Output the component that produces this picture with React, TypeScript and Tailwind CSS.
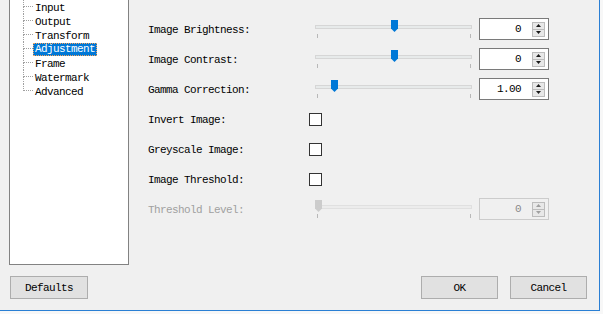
const mono = "font-['Liberation_Mono',monospace] text-[11px] tracking-[-0.6px]";

const treeItems = ["Input", "Output", "Transform", "Adjustment", "Frame", "Watermark", "Advanced"];

interface SliderProps {
    pos: number;
    disabled?: boolean;
}

const Slider: React.FC<SliderProps> = ({ pos, disabled }) => {
    return (
        <div className="relative w-[170px] h-[30px]">
            <div
                className={
                    disabled
                        ? "absolute left-[6px] top-[11px] w-[157px] h-[4px] border border-[#e0e0e0] bg-[#ececec]"
                        : "absolute left-[6px] top-[11px] w-[157px] h-[4px] border border-[#d6d6d6] bg-[#e7eaea]"
                }
            />
            <div className="absolute left-[8px] top-[20px] w-px h-[4px] bg-[#b8b8b8]" />
            <div className="absolute left-[161px] top-[20px] w-px h-[4px] bg-[#b8b8b8]" />
            <svg
                className="absolute top-[6px]"
                style={{ left: pos }}
                width="7"
                height="12"
                viewBox="0 0 7 12"
            >
                <path
                    d="M0 0H7V8.5L3.5 12L0 8.5Z"
                    fill={disabled ? "#cccccc" : "#0078d7"}
                />
            </svg>
        </div>
    );
};

const Arrow: React.FC<{ up?: boolean; disabled?: boolean }> = ({ up, disabled }) => (
    <svg width="5" height="3" viewBox="0 0 5 3">
        <path
            d={up ? "M2.5 0L5 3H0Z" : "M0 0H5L2.5 3Z"}
            fill={disabled ? "#a0a0a0" : "#1a1a1a"}
        />
    </svg>
);

const SpinBox: React.FC<{ value: string; disabled?: boolean }> = ({ value, disabled }) => {
    return (
        <div
            className={
                disabled
                    ? "flex items-center w-[70px] h-[22px] border border-[#cccccc] bg-[#f0f0f0]"
                    : "flex items-center w-[70px] h-[22px] border border-[#7a7a7a] bg-white"
            }
        >
            <span
                className={`flex-1 text-right pr-[11px] pt-px ${mono} ${
                    disabled ? "text-[#8a8a8a]" : "text-black"
                }`}
            >
                {value}
            </span>
            <div className="flex flex-col w-[13px] mr-[3px]">
                <div className="flex items-center justify-center h-[8px] border border-[#bcbcbc] bg-[#e8e8e8]">
                    <Arrow up disabled={disabled} />
                </div>
                <div className="flex items-center justify-center h-[8px] -mt-px border border-[#bcbcbc] bg-[#e8e8e8]">
                    <Arrow disabled={disabled} />
                </div>
            </div>
        </div>
    );
};

const CheckBox: React.FC = () => (
    <div className="w-[13px] h-[13px] border border-[#333333] bg-white" />
);

const Label: React.FC<{ text: string; disabled?: boolean }> = ({ text, disabled }) => (
    <div className={`w-[161px] pt-[2px] ${mono} ${disabled ? "text-[#a0a0a0]" : "text-black"}`}>{text}</div>
);

const Button: React.FC<{ text: string; width: string }> = ({ text, width }) => (
    <div
        className={`${width} h-[23px] flex items-center justify-center pt-px border border-[#adadad] bg-[#e1e1e1] text-black ${mono}`}
    >
        {text}
    </div>
);

export default function App() {
    return (
        <div className="w-[603px] h-[314px] bg-[#f7f7f7]">
            <div className="w-[600px] h-[311px] bg-[#f0f0f0] border-r border-b border-[#2a7fd4] flex flex-col">
                <div className="flex h-[265px]">
                    <div className="ml-[9px] w-[120px] h-[265px] bg-white border-l border-r border-b border-[#828282]">
                        <div className="flex flex-col">
                            {treeItems.map((item, i) => {
                                const last = i === treeItems.length - 1;
                                const selected = item === "Adjustment";
                                return (
                                    <div key={item} className="flex items-center h-[14px]">
                                        <div className="w-[13px]" />
                                        <div className="flex flex-col w-[10px] h-[14px]">
                                            <div className="h-[7px] border-l border-b border-dotted border-[#a0a0a0]" />
                                            <div
                                                className={
                                                    last
                                                        ? "h-[7px]"
                                                        : "h-[7px] border-l border-dotted border-[#a0a0a0]"
                                                }
                                            />
                                        </div>
                                        <div
                                            className={
                                                selected
                                                    ? `h-[13px] flex items-center px-px pt-px border border-dotted border-[#f7a45b] bg-[#0078d7] text-white ${mono}`
                                                    : `h-[13px] flex items-center px-[2px] pt-[2px] text-black ${mono}`
                                            }
                                        >
                                            {item}
                                        </div>
                                    </div>
                                );
                            })}
                        </div>
                    </div>
                    <div className="ml-[19px] pt-[14px] flex flex-col">
                        <div className="flex items-center h-[30px]">
                            <Label text="Image Brightness:" />
                            <Slider pos={82} />
                            <SpinBox value="0" />
                        </div>
                        <div className="flex items-center h-[30px]">
                            <Label text="Image Contrast:" />
                            <Slider pos={82} />
                            <SpinBox value="0" />
                        </div>
                        <div className="flex items-center h-[30px]">
                            <Label text="Gamma Correction:" />
                            <Slider pos={22} />
                            <SpinBox value="1.00" />
                        </div>
                        <div className="flex items-center h-[30px]">
                            <Label text="Invert Image:" />
                            <CheckBox />
                        </div>
                        <div className="flex items-center h-[30px]">
                            <Label text="Greyscale Image:" />
                            <CheckBox />
                        </div>
                        <div className="flex items-center h-[30px]">
                            <Label text="Image Threshold:" />
                            <CheckBox />
                        </div>
                        <div className="flex items-center h-[30px]">
                            <Label text="Threshold Level:" disabled />
                            <Slider pos={6} disabled />
                            <SpinBox value="0" disabled />
                        </div>
                    </div>
                </div>
                <div className="flex justify-between mt-[11px] pl-[10px] pr-[12px]">
                    <Button text="Defaults" width="w-[78px]" />
                    <div className="flex gap-[12px]">
                        <Button text="OK" width="w-[77px]" />
                        <Button text="Cancel" width="w-[77px]" />
                    </div>
                </div>
            </div>
        </div>
    );
}
